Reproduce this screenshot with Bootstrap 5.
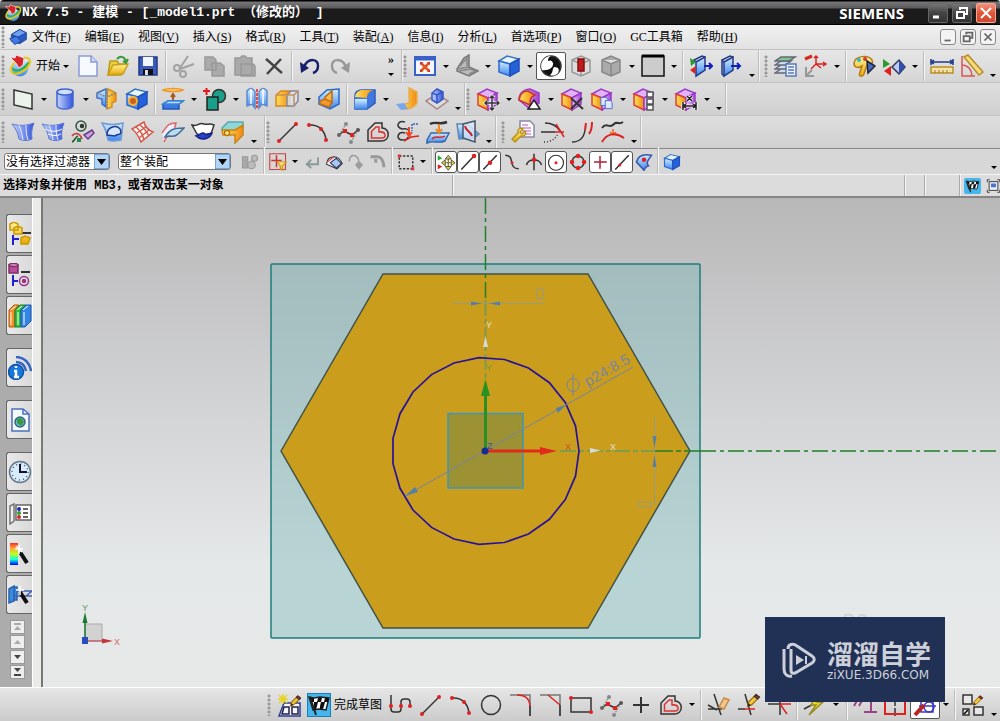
<!DOCTYPE html>
<html lang="zh-CN">
<head>
<meta charset="utf-8">
<meta name="viewport" content="width=device-width, initial-scale=1">
<title>NX 7.5 - 建模</title>
<link href="https://cdn.jsdelivr.net/npm/bootstrap@5.3.0/dist/css/bootstrap.min.css" rel="stylesheet">
<script src="https://cdn.jsdelivr.net/npm/bootstrap@5.3.0/dist/js/bootstrap.bundle.min.js" defer></script>
<style>
body{font:12px/16px "Liberation Serif","Noto Sans CJK SC",sans-serif;color:#000;background:#d6d6d6;overflow:hidden}
.btn{--bs-btn-padding-x:0;--bs-btn-padding-y:0;--bs-btn-font-size:12px;--bs-btn-line-height:16px;--bs-btn-border-radius:2px;font-family:inherit;color:#000;flex:none;white-space:nowrap}
.titlebar{height:25px;background:linear-gradient(#000 0,#000 1px,#77777a 2px,#5a5a5d 8px,#1b1b1c 9px,#1b1b1c 24px,#000 24px);color:#fff;font:bold 13px/18px "Liberation Mono","Noto Sans CJK SC",monospace;border-radius:4px 4px 0 0}
.caption{white-space:pre}
.maker{font:bold 15px/18px "Open Sans",sans-serif}
.win{width:20px;height:20px;border:1px solid #666;background:linear-gradient(#777,#444 50%,#333)}
.win.shut{background:linear-gradient(#f0927c,#e2563a 50%,#cf4a30);border-color:#f5a898}
.doc{width:16px;height:16px;border:1px solid #888;border-radius:3px;background:#f3f3f3}
.win svg,.doc svg{display:block;width:100%;height:100%;fill:none;stroke-width:2}
.menus{height:24px;background:linear-gradient(#f1f1f1,#e2e2e2)}
.menus a{color:#000;text-decoration:none;white-space:nowrap}
.menu-list{gap:14px}
.strip{height:33px;background:linear-gradient(#e6e6e6,#d5d5d5);border-top:1px solid #c3c3c3;overflow:hidden}
.strip.lower{background:linear-gradient(#dedede,#d0d0d0)}
.bar{height:100%;flex:none;border-right:1px solid #bdbdbd;box-shadow:1px 0 #f2f2f2}
.bar-main{width:402px}
.grip{width:8px;height:22px;flex:none;background:radial-gradient(circle at 3px 2px,#999 1px,transparent 2px) 0 0/8px 4px}
.tool{width:30px;height:28px;border:0;display:flex;align-items:center;justify-content:center}
.tool svg,.small-tool svg,.tab svg{width:24px;height:24px;fill:none;stroke:#333;stroke-width:1.5;flex:none}
.lit{background:#fff;border:1px solid #555}
.blue{background:#45b6ee;border:1px solid #1580b8;width:24px;height:24px;margin:0 3px}
.start{width:65px}
.drop{width:12px;height:24px;border:0;display:flex;align-items:center;justify-content:center}
.drop::after{content:"";border:solid transparent;border-width:3px 3px 0;border-top-color:#000}
.more{align-self:flex-end;height:14px}
.split{width:2px;height:30px;margin:0 2px;flex:none;border-left:1px solid #bcbcbc;background:#f5f5f5}
.picks{height:26px;border-top:1px solid #888;background:#d7d7d7}
.small-tool{width:22px;height:22px;border:0;display:flex;align-items:center;justify-content:center}
.small-tool svg{width:18px;height:18px}
.small-tool.lit{border:1px solid #555;border-radius:3px}
.combo{position:relative;flex:none}
.combo select{appearance:none;width:100%;height:17px;border:1px solid #777;border-radius:3px;padding:0 18px 0 1px;font-family:inherit;font-size:12px;line-height:14px;background:#fff;color:#000;display:block}
.combo svg{position:absolute;right:1px;top:1px;width:15px;height:15px;pointer-events:none}
.combo.wide-a{width:106px}.combo.wide-b{width:113px}
.prompt{height:24px;border-top:1px solid #f5f5f5;border-bottom:2px solid #858585;background:#dcdcdc;font:bold 12px/20px "Liberation Mono","Noto Sans CJK SC",monospace}
.cell{border-left:1px solid #aaa;box-shadow:inset 1px 0 #f5f5f5;height:100%}
.cell-a{width:20px}.cell-b{width:35px}.cell-c{width:41px}
.state{width:17px;height:16px}
.state svg{width:15px}
.msg{width:452px;padding-left:3px}
.side{width:32px;background:#acacac;padding:16px 0 0 6px}
.tab{width:26px;height:39px;border:1px solid #666;border-right:0;border-radius:3px 0 0 3px;background:linear-gradient(90deg,#e9e9e9,#d9d9d9);display:flex;align-items:center;justify-content:center;margin-bottom:2px}
.tab.apart{margin-top:13px}
.scrollers{padding-top:6px}
.scroller{width:15px;height:14px;border:1px solid #999;border-radius:0;background:#eee;margin:0 0 1px 4px;display:block}
.scroller svg{display:block;width:100%;height:100%}
.gutter{width:11px;background:#eaeae8;border-right:2px solid #777a74;border-left:1px solid #fff}
.stage{min-height:0}
.view{background:linear-gradient(#b8b8b9,#d4d5d6 45%,#e5e8e8 75%,#e7e9e9)}
.view>svg{position:absolute;inset:0;width:100%;height:100%;display:block}
.foot{height:34px;background:linear-gradient(#e6e6e6,#cbcbcb);border-top:1px solid #fff;padding-left:266px}
.brand{position:absolute;right:55px;bottom:19px;width:180px;height:85px;background:#213055;color:#cdd0d9;font-family:"Noto Sans CJK SC",sans-serif}
.brand svg{width:38px;height:38px;fill:none;stroke:#cdd0d9;stroke-width:3}
.brand b{font-size:26px;line-height:30px;display:block}
.brand small{font:12px/14px "DejaVu Sans",sans-serif;display:block}
</style>
</head>
<body class="d-flex flex-column vh-100 position-relative">
<svg width="0" height="0" class="position-absolute">
<defs>
<linearGradient id="gb"><stop stop-color="#c6d6ff"/><stop offset="1" stop-color="#3355dd"/></linearGradient>
<linearGradient id="gl" x2="0" y2="1"><stop stop-color="#d6efff"/><stop offset="1" stop-color="#3b86ee"/></linearGradient>
<linearGradient id="gy" x2="0" y2="1"><stop stop-color="#fff6a0"/><stop offset="1" stop-color="#e8a800"/></linearGradient>
<linearGradient id="go"><stop stop-color="#ffe25a"/><stop offset="1" stop-color="#f08a10"/></linearGradient>
<linearGradient id="gp"><stop stop-color="#f0c8ff"/><stop offset="1" stop-color="#a545d4"/></linearGradient>
<linearGradient id="rain" x2="0" y2="1"><stop stop-color="#e33"/><stop offset=".25" stop-color="#fa3"/><stop offset=".5" stop-color="#bf2"/><stop offset=".75" stop-color="#1fd"/><stop offset="1" stop-color="#00f"/></linearGradient>
</defs>
<symbol id="cube" viewBox="0 0 24 24"><path d="M2 7l8-5 12 3-9 5z" fill="#e4f5ff" stroke="#3979b8"/><path d="M2 7l11 3v12L2 18z" fill="url(#gl)" stroke="#2a6ad0"/><path d="M13 10l9-5v12l-9 5z" fill="#2462dc" stroke="#2050b8"/></symbol>
<symbol id="pink" viewBox="0 0 24 24"><path d="M2 7l9-5 10 4-9 5z" fill="#e3b2fa" stroke="#9b3bc8"/><path d="M2 7l10 4v12L2 18z" fill="url(#go)" stroke="#e0402c"/><path d="M12 11l9-5v11l-9 6z" fill="url(#gp)" stroke="#9b3bc8"/></symbol>
<symbol id="logo" viewBox="0 0 24 24"><circle cx="12" cy="14" r="8.500" fill="url(#gl)" stroke="none"/><path d="M4 14c4 5 11 2 17-6M5 19c6 2 13-2 14-8" stroke="#24b04a" stroke-width="2"/><ellipse cx="12.500" cy="12" rx="11" ry="6" transform="rotate(-35 12 12)" stroke="#e8c820" stroke-width="2" fill="none"/><path d="M2 3l5 1 1-3 8 3-1 7-4 3-3-5z" fill="#d8232a" stroke="#fff" stroke-width=".7"/></symbol>
<symbol id="flag" viewBox="0 0 24 24"><path d="M2 4l5 1 6-1 9 1-3 12-7-1-6 1z" fill="#fff" stroke="#222"/><path d="M3 5h4v4H4zm8 0h4l-1 4h-4zM7 9h4l-1 4H7zm7 0h4l-1 4h-4zM6 13h4l-1 4H7zm7 0h4l-1 3h-3zm5-8h4l-1 4h-4z" fill="#111" stroke="none"/><path d="M3 4l6 18" stroke="#222" stroke-width="2"/></symbol>
<symbol id="spline" viewBox="0 0 24 24"><path d="M3 15L8 11l8 4 6-5" stroke="#333"/><path d="M3 15L10 4M15 22l7-12" stroke="#999" stroke-dasharray="2 1"/><g stroke="none"><path d="M7 9h4v4H7zm7 4h4v4h-4z" fill="#d22"/><circle cx="3" cy="15" r="2" fill="#666"/><circle cx="10" cy="4" r="2" fill="#888"/><circle cx="15" cy="22" r="2" fill="#888"/><circle cx="22" cy="10" r="2" fill="#555"/></g></symbol>
<symbol id="offset" viewBox="0 0 24 24"><path d="M2 21V10l7-7h7v5c8 0 9 13-1 13z" stroke="#333"/><path d="M5.500 18v-6.500L10 7h3v5c7-1 8 6 3 6z" stroke="#d33"/></symbol>
<symbol id="line" viewBox="0 0 24 24"><path d="M3 21L20 4" stroke="#333"/><circle cx="3" cy="21" r="2" fill="#d22" stroke="none"/><circle cx="20" cy="4" r="2" fill="#d22" stroke="none"/></symbol>
<symbol id="arc" viewBox="0 0 24 24"><path d="M3 5c9-1 16 5 17 15"/><g fill="#d22" stroke="none"><circle cx="3" cy="5" r="2"/><circle cx="15" cy="9" r="2"/><circle cx="20" cy="20" r="2"/></g></symbol>
<symbol id="sheet" viewBox="0 0 24 24"><path d="M1 4c7 2 14 2 22-1-2 5-3 10-2 16-5 2-8 2-13 0C7 13 5 9 1 4z" fill="url(#gb)" stroke="#6078d0" stroke-width="1"/><path d="M8 5c2 5 3 9 4 15M15 5c0 5 0 9 2 15" stroke="#eef" stroke-width="1"/></symbol>
<symbol id="copy" viewBox="0 0 24 24"><path d="M3 3h8l3 3v10H3z" fill="#dde8ff" stroke="#4a6bd0"/><path d="M10 8h8l3 3v10H10z" fill="#dde8ff" stroke="#4a6bd0"/></symbol>
<symbol id="pencil" viewBox="0 0 24 24"><path d="M8 16l1-5 9-9 4 3-9 9z" fill="#f3c934" stroke="#9b6b10"/><path d="M16 4l2-2 4 3-2 2z" fill="#d23"/><path d="M8 16l1-4 3 3z" fill="#222" stroke="none"/></symbol>
</svg>

<header class="titlebar d-flex align-items-center px-1 flex-shrink-0">
<svg width="18" height="18" viewBox="0 0 24 24" fill="none"><use href="#logo"/></svg>
<span class="caption">NX 7.5 - 建模 - [_model1.prt （修改的） ]</span>
<span class="maker ms-auto me-4">SIEMENS</span>
<div class="d-flex gap-1">
<button class="btn win" aria-label="最小化"><svg viewBox="0 0 18 18" stroke="#fff"><path d="M4 13h6" stroke-width="3"/></svg></button>
<button class="btn win" aria-label="还原"><svg viewBox="0 0 18 18" stroke="#fff"><path d="M7 6V4h7v6h-3M4 8h7v6H4z"/></svg></button>
<button class="btn win shut" aria-label="关闭"><svg viewBox="0 0 18 18" stroke="#fff"><path d="M4 4l10 10M14 4L4 14"/></svg></button>
</div>
</header>

<nav class="menus d-flex align-items-center flex-shrink-0 pe-1">
<span class="grip me-n1"></span>
<svg class="me-1" width="20" height="20" viewBox="0 0 24 24" fill="none"><path d="M4 9l10-6 8 4v8l-8 5-10-3z" fill="#2a5bc8" stroke="#1c3f90"/><path d="M4 9l10-6 8 4-10 5z" fill="#6fa0f0" stroke="#1c3f90"/><path d="M2 14l8-3 6 6-8 4z" fill="#3f7be0" stroke="#1c3f90"/></svg>
<div class="menu-list d-flex">
<a href="#">文件(<u>F</u>)</a><a href="#">编辑(<u>E</u>)</a><a href="#">视图(<u>V</u>)</a><a href="#">插入(<u>S</u>)</a><a href="#">格式(<u>R</u>)</a><a href="#">工具(<u>T</u>)</a><a href="#">装配(<u>A</u>)</a><a href="#">信息(<u>I</u>)</a><a href="#">分析(<u>L</u>)</a><a href="#">首选项(<u>P</u>)</a><a href="#">窗口(<u>O</u>)</a><a href="#">GC工具箱</a><a href="#">帮助(<u>H</u>)</a>
</div>
<div class="d-flex ms-auto gap-1">
<button class="btn doc" aria-label="最小化窗口"><svg viewBox="0 0 16 16" stroke="#666"><path d="M4 12h7"/></svg></button>
<button class="btn doc" aria-label="还原窗口"><svg viewBox="0 0 16 16" stroke="#666"><path d="M6 5V3h7v6h-3M3 7h7v6H3z"/></svg></button>
<button class="btn doc" aria-label="关闭窗口"><svg viewBox="0 0 16 16" stroke="#666"><path d="M4 4l8 8M12 4l-8 8"/></svg></button>
</div>
</nav>

<div class="strip d-flex flex-shrink-0">
<div class="bar bar-main d-flex align-items-center">
<span class="grip"></span>
<button class="btn start d-flex align-items-center border-0"><svg width="24" height="26" viewBox="0 0 24 24" fill="none"><use href="#logo"/></svg><span class="ms-1">开始</span><span class="drop"></span></button>
<button class="btn tool" aria-label="新建"><svg viewBox="0 0 24 24"><path d="M3 2h12l6 6v14H3z" fill="#f6f9ff" stroke="#8a9ad8"/><path d="M15 2v6h6" fill="#cfdcff" stroke="#8a9ad8"/></svg></button>
<button class="btn tool" aria-label="打开"><svg viewBox="0 0 24 24"><path d="M2 21L4 7h7l2 3h7v3l-5 8z" fill="#e9cf3c" stroke="#b99a1c"/><path d="M2 21l5-10 15-1-5 10z" fill="url(#gy)" stroke="#c7a11c"/><path d="M11 5c4-4 8-2 9 3m-3-1l3 2 2-4" stroke="#3a9a3a" stroke-width="2"/></svg></button>
<button class="btn tool" aria-label="保存"><svg viewBox="0 0 24 24"><path d="M3 3h18v18H3z" fill="#3b59b8" stroke="#223a88"/><path d="M7 3h10v9H7z" fill="#f2f5fa" stroke="none"/><path d="M7 15h10v6H7z" fill="#111" stroke="none"/><path d="M9 16h3v5H9z" fill="#ddd" stroke="none"/></svg></button>
<span class="split"></span>
<button class="btn tool" aria-label="剪切"><svg viewBox="0 0 24 24"><g stroke="#a2a2a2" stroke-width="2"><path d="M8 14L16 2M8 15l14-5M8 14l-1-1"/><circle cx="5" cy="14" r="3"/><circle cx="11" cy="20" r="3"/></g></svg></button>
<button class="btn tool" aria-label="复制"><svg viewBox="0 0 24 24"><path d="M3 3h8l3 3v10H3zM10 9h8l4 3v10H10z" fill="#aaa" stroke="#999"/></svg></button>
<button class="btn tool" aria-label="粘贴"><svg viewBox="0 0 24 24"><path d="M3 4h5l2-2h3l2 2h5v17H3zM9 10h12l2 2v10H9z" fill="#aaa" stroke="#999"/></svg></button>
<button class="btn tool" aria-label="删除"><svg viewBox="0 0 24 24"><path d="M4 5c4 3 11 10 16 14M19 5L5 20" stroke="#444" stroke-width="2.500"/></svg></button>
<span class="split"></span>
<button class="btn tool" aria-label="撤消"><svg viewBox="0 0 24 24"><path d="M6 13C10 3 21 5 20 12c0 4-2 6-5 7" stroke="#17206a" stroke-width="2.500"/><path d="M2 8l1 11 8-5z" fill="#17206a" stroke="none"/></svg></button>
<button class="btn tool" aria-label="重做"><svg viewBox="0 0 24 24"><path d="M18 13C14 3 3 5 4 12c0 4 2 6 5 7" stroke="#999" stroke-width="2.500"/><path d="M22 8l-1 11-8-5z" fill="#999" stroke="none"/></svg></button>
<div class="ms-auto d-flex flex-column align-items-center me-1"><b>»</b><button class="btn drop more" aria-label="更多"></button></div>
</div>
<div class="bar d-flex align-items-center">
<span class="grip"></span>
<button class="btn tool" aria-label="适合窗口"><svg viewBox="0 0 24 24"><path d="M2 3h20v18H2z" fill="#f4f6ff" stroke="#3862c8" stroke-width="2"/><path d="M2 5h20" stroke="#3862c8" stroke-width="3"/><path d="M8 9l8 8M16 9l-8 8" stroke="#e05820" stroke-width="2.500"/><path d="M7 8h3l-3 3zm10 0v3l-3-3zM7 18v-3l3 3zm10 0h-3l3-3z" fill="#d03020" stroke="none"/></svg></button><button class="btn drop" aria-label="适合选项"></button>
<button class="btn tool" aria-label="视图方位"><svg viewBox="0 0 24 24"><g stroke="#777"><path d="M2 15L9 4l5-3v12l9 4-9 5-12-5z" fill="#bbb"/><path d="M2 15l12-2M5 12l7-8v8M4 17l11-2 6 2M14 20l7-3" stroke="#888"/></g></svg></button><button class="btn drop" aria-label="方位选项"></button>
<button class="btn tool" aria-label="着色"><svg><use href="#cube"/></svg></button><button class="btn drop" aria-label="着色选项"></button>
<button class="btn tool lit" aria-label="真实着色"><svg viewBox="0 0 24 24"><circle cx="12" cy="12" r="10" fill="#111"/><path d="M12 2a10 10 0 0 0-9 14c6 1 12-2 11-7-1-3-3-3-5-2 0-3 1-4 3-5zM15 13c4 0 6 2 4 6-3 3-6 3-8 2 3-2 2-5 4-8z" fill="#fff" stroke="none"/></svg></button>
<button class="btn tool" aria-label="截面"><svg viewBox="0 0 24 24"><path d="M3 6l9-4 9 4v12l-9 4-9-4zM3 6l9 4 9-4M12 10v12" fill="#ddd" stroke="#999"/><path d="M9 5h6v12H9z" fill="#c31b1b" stroke="#801010"/></svg></button>
<button class="btn tool" aria-label="编辑截面"><svg viewBox="0 0 24 24"><path d="M3 6l9-4 9 4v12l-9 4-9-4zM3 6l9 4 9-4M12 10v12" fill="#aaa" stroke="#888"/></svg></button><button class="btn drop" aria-label="截面选项"></button>
<button class="btn tool" aria-label="背景"><svg viewBox="0 0 24 24"><path d="M1 2h22v20H1z" fill="#ccc" stroke="#111"/><path d="M1 2h22" stroke="#000" stroke-width="3"/></svg></button><button class="btn drop" aria-label="背景选项"></button>
<span class="split"></span>
<button class="btn tool" aria-label="显示隐藏"><svg viewBox="0 0 24 24"><path d="M7 8l9-5v13l-9 6z" fill="url(#gl)" stroke="#223a88"/><path d="M7 8L5 6l8-4 3 1" stroke="#223a88"/><path d="M15 12h8m-3-3l3 3-3 3" stroke="#1020c0" stroke-width="2"/><path d="M1 4l6 4-5 4z" fill="#2a9a2a" stroke="none"/><path d="M7 12l-6 4 5 4z" fill="#d22" stroke="none"/></svg></button>
<button class="btn tool" aria-label="隐藏"><svg viewBox="0 0 24 24"><path d="M5 8l9-5v13l-9 6z" fill="url(#gl)" stroke="#223a88"/><path d="M5 8L3 6l8-4 3 1M3 6v14l2 2" stroke="#223a88"/><path d="M12 12h9m-3-3l3 3-3 3" stroke="#1020c0" stroke-width="2"/></svg></button>
<button class="btn drop more" aria-label="工具条选项"></button>
</div>
<div class="d-flex align-items-center">
<span class="grip ms-1"></span>
<button class="btn tool" aria-label="图层设置"><svg viewBox="0 0 24 24"><g stroke="#667"><path d="M1 19l6-4h10l-6 4zM1 15l6-4h10l-6 4zM1 11l6-4h10l-6 4z" fill="#cde"/><path d="M1 7l6-4h14l-6 4z" fill="#7cc98c"/></g><path d="M12 10h10v12H12z" fill="#eef3ff" stroke="#5878b8"/><path d="M14 13h6M14 16h6M14 19h6" stroke="#5878b8"/></svg></button>
<button class="btn tool" aria-label="WCS"><svg viewBox="0 0 24 24"><path d="M12 2v8l-5 5M12 10h10m-3-2l3 2-3 2M12 10l5 4M10 4l2-2 2 2" stroke="#d22"/><path d="M1 5l7-3" stroke="#d4291e" stroke-width="3"/><path d="M2 13v9h8M2 22l6-6" stroke="#999" stroke-width="2"/></svg></button><button class="btn drop" aria-label="WCS选项"></button>
<span class="split"></span>
<button class="btn tool" aria-label="对象显示"><svg viewBox="0 0 24 24"><path d="M2 9C3 2 16 0 20 6c2 4-2 5-5 5l-3 9c-2 4-6 2-4-2l2-6c-5 3-8 1-8-3z" fill="url(#gy)" stroke="#b87a18"/><circle cx="7" cy="6" r="2" fill="#2bc" stroke="none"/><circle cx="13" cy="5" r="2" fill="#d33" stroke="none"/><path d="M15 7l8 5-7 7z" fill="#456cc8" stroke="#223"/></svg></button>
<button class="btn tool" aria-label="显示切换"><svg viewBox="0 0 24 24"><path d="M1 5l7 5-7 4z" fill="#2a9a2a" stroke="none"/><path d="M9 12l-7 5 7 5z" fill="#d22" stroke="none"/><path d="M10 13l7-7 6 7-6 7z" fill="#b8cdf0" stroke="#335"/><path d="M17 6v14l6-7z" fill="#3050b0" stroke="none"/></svg></button><button class="btn drop" aria-label="显示选项"></button>
<span class="split"></span>
<button class="btn tool" aria-label="测量距离"><svg viewBox="0 0 24 24"><path d="M1 13h22v6H1z" fill="#f4e2a8" stroke="#b98e28"/><path d="M5 16v3M9 16v3M13 16v3M17 16v3" stroke="#a87818" stroke-width="1"/><path d="M1 8h22M1 5v6M23 5v6M4 6L1 8l3 2M20 6l3 2-3 2" stroke="#223a88"/></svg></button>
<button class="btn tool" aria-label="测量角度"><svg viewBox="0 0 24 24"><path d="M2 2v20h13M2 11c6 0 10 5 10 11" stroke="#d55"/><path d="M4 3l4-2 15 17-4 3z" fill="#f5db7a" stroke="#b98e28"/></svg></button>
<button class="btn drop more" aria-label="工具条选项"></button>
</div>
</div>

<div class="strip lower d-flex flex-shrink-0">
<div class="bar d-flex align-items-center">
<span class="grip"></span>
<button class="btn tool" aria-label="草图"><svg viewBox="0 0 24 24"><path d="M3 3l18 4v15L3 18z" fill="#eaf3ea" stroke="#333"/></svg></button><button class="btn drop" aria-label="草图选项"></button>
<button class="btn tool" aria-label="圆柱"><svg viewBox="0 0 24 24"><g stroke="#4464d0"><path d="M4 5v14c2 4 14 4 16 0V5z" fill="url(#gb)"/><ellipse cx="12" cy="5" rx="8" ry="3" fill="#cfe0ff"/></g></svg></button><button class="btn drop" aria-label="圆柱选项"></button>
<button class="btn tool" aria-label="求和"><svg viewBox="0 0 24 24"><path d="M2 6l9-4v18l-4-3v-5l-5-1z" fill="url(#gl)" stroke="#3b6fc0"/><path d="M13 2l8 4v8l-4 2v4l-5 2V10z" fill="url(#go)" stroke="#d8901c"/><path d="M2 6l10 4 9-4M12 2v20" stroke="#888" stroke-dasharray="2 1"/></svg></button>
<button class="btn tool" aria-label="孔"><svg viewBox="0 0 24 24"><use href="#cube"/><circle cx="8" cy="14" r="4" fill="#c9621a" stroke="#f3b13c" stroke-width="2"/></svg></button>
<span class="split"></span>
<button class="btn tool" aria-label="凸台"><svg viewBox="0 0 24 24"><path d="M2 3c4-2 16-2 20 0-4 2-16 2-20 0z" fill="#ffd890" stroke="#f09828"/><path d="M12 14V7m-2 3l2-3 2 3" stroke="#a85a20" stroke-width="2"/><path d="M2 17l5-3h15l-4 3v5H2z" fill="#3c79e2" stroke="#2357b8"/><path d="M2 17h16l4-3H7z" fill="#b8dcff" stroke="#3b86d8"/></svg></button><button class="btn drop" aria-label="凸台选项"></button>
<button class="btn tool" aria-label="布尔"><svg viewBox="0 0 24 24"><path d="M0 4h7M3.500 1v7" stroke="#e01818" stroke-width="2"/><circle cx="16" cy="9" r="6.500" fill="#1aa08a"/><path d="M4 10h11v13H4z" fill="#1aa08a" stroke="#222"/></svg></button><button class="btn drop" aria-label="布尔选项"></button>
<button class="btn tool" aria-label="镜像"><svg viewBox="0 0 24 24"><g stroke="#5a88d0"><path d="M2 4c3-4 6-3 8 1v16l-3-4-5 2zM22 4c-3-4-6-3-8 1v16l3-4 5 2z" fill="url(#gl)"/></g><path d="M6 2v15M18 2v15" stroke="#fff"/><path d="M12 2v20" stroke="#d22" stroke-dasharray="3 1"/></svg></button>
<button class="btn tool" aria-label="修剪体"><svg viewBox="0 0 24 24"><path d="M1 8l5-4h9v15H1z" fill="url(#go)" stroke="#d88820"/><path d="M12 8l4-4h7v10l-4 5h-7z" fill="#d8e4f8" stroke="#889" fill-opacity=".8"/><path d="M1 8h18l4-4M19 8v11" stroke="#c89050"/></svg></button><button class="btn drop" aria-label="修剪选项"></button>
<button class="btn tool" aria-label="抽壳"><svg viewBox="0 0 24 24"><path d="M2 10l8-7 12-1v15l-9 5-11-5z" fill="url(#gl)" stroke="#2a6ad0"/><path d="M8 10l7-6v12l-7-2z" fill="#f6b74a" stroke="#b76b10"/><path d="M3 14l5-2 7 3-3 5-9-3z" fill="#ef9a2a" stroke="#c46f10"/></svg></button>
<span class="split"></span>
<button class="btn tool" aria-label="边倒圆"><svg viewBox="0 0 24 24"><path d="M2 9c0-5 4-6 7-6h13v13l-8 6H2z" fill="#3f78df" stroke="#2d5dc0"/><path d="M2 10c1-5 4-7 8-7h11c-5 1-7 4-7 8z" fill="url(#go)" stroke="none"/><path d="M2 12h12v10H2z" fill="url(#gl)" stroke="none"/></svg></button><button class="btn drop" aria-label="倒圆选项"></button>
<button class="btn tool" aria-label="面倒圆"><svg viewBox="0 0 24 24"><path d="M14 1l8 4v11c-4 6-11 7-16 5l4-4c4 0 5-3 4-6z" fill="url(#go)" stroke="#e8ae50"/><path d="M1 17l8-1 4 6-7 1z" fill="#76a7f0" stroke="none"/></svg></button>
<button class="btn tool" aria-label="偏置面"><svg viewBox="0 0 24 24"><path d="M1 14l11-7 11 7-11 8z" fill="#ddd" stroke="#a88"/><path d="M7 6l5-4 6 3v7l-6 4-5-3z" fill="url(#gb)" stroke="#3858c0"/><path d="M7 6l5 2 6-3M12 8v8" stroke="#3858c0"/></svg></button>
<button class="btn drop more" aria-label="工具条选项"></button>
</div>
<div class="bar d-flex align-items-center">
<span class="grip"></span>
<button class="btn tool" aria-label="移动面"><svg viewBox="0 0 24 24"><use href="#pink"/><path d="M16 9v14M9 16h14M14 11l2-2 2 2M14 21l2 2 2-2M11 14l-2 2 2 2M21 14l2 2-2 2" stroke="#fff" stroke-width="3"/><path d="M16 9v14M9 16h14M14 11l2-2 2 2M14 21l2 2 2-2M11 14l-2 2 2 2M21 14l2 2-2 2"/></svg></button><button class="btn drop" aria-label="移动选项"></button>
<button class="btn tool" aria-label="拉出面"><svg viewBox="0 0 24 24"><path d="M1 13c0-8 6-11 11-11l9 4v10l-9 6z" fill="url(#gp)" stroke="#9b3bc8"/><path d="M1 13c1-7 5-9 9-9l7 4c-5 2-5 5-5 10z" fill="url(#go)" stroke="#c33"/><path d="M16 13l6 9H10z" fill="#fff" stroke="#222"/></svg></button><button class="btn drop" aria-label="拉出选项"></button>
<button class="btn tool" aria-label="删除面"><svg viewBox="0 0 24 24"><use href="#pink"/><path d="M11 11l12 11M22 11L11 22" stroke-width="2"/></svg></button>
<button class="btn tool" aria-label="复制面"><svg viewBox="0 0 24 24"><use href="#pink"/><use href="#copy" x="9" y="8" width="15" height="16"/></svg></button><button class="btn drop" aria-label="复制选项"></button>
<button class="btn tool" aria-label="成组面"><svg viewBox="0 0 24 24"><use href="#pink"/><path d="M15 5h6v5h-6zM15 12h6v5h-6zM15 18h6v5h-6z" fill="#fff" stroke="#555"/></svg></button><button class="btn drop" aria-label="成组选项"></button>
<button class="btn tool" aria-label="线性尺寸"><svg viewBox="0 0 24 24"><use href="#pink"/><path d="M9 15v8M22 15v8M9 19h13M12 17l-3 2 3 2M19 17l3 2-3 2M13 9l5 5M18 9l-5 5" stroke="#fff" stroke-width="3"/><path d="M9 15v8M22 15v8M9 19h13M12 17l-3 2 3 2M19 17l3 2-3 2M13 9l5 5M18 9l-5 5" stroke="#222"/></svg></button><button class="btn drop" aria-label="尺寸选项"></button>
<button class="btn drop more" aria-label="工具条选项"></button>
</div>
</div>

<div class="strip lower d-flex flex-shrink-0">
<div class="bar d-flex align-items-center pe-1">
<span class="grip"></span>
<button class="btn tool" aria-label="直纹"><svg><use href="#sheet"/></svg></button>
<button class="btn tool" aria-label="通过曲线网格"><svg viewBox="0 0 24 24"><use href="#sheet"/><path d="M4 9c6 3 12 3 17 0M7 14c5 2 9 2 13 0" stroke="#fff" stroke-width="1"/></svg></button>
<button class="btn tool" aria-label="扫掠"><svg viewBox="0 0 24 24"><circle cx="10" cy="6" r="5" stroke="#354"/><circle cx="11" cy="6" r="1.500" fill="#252"/><path d="M1 16c3-4 8-3 10 3" stroke="#c33"/><path d="M1 22c3-1 3-5 6-6" stroke="#252"/><path d="M6 18h4v4H6z" fill="#285" stroke="none"/><path d="M13 15l8-5 2 3-6 6z" fill="#c6a4dc" stroke="#6a3a90"/></svg></button>
<button class="btn tool" aria-label="N边曲面"><svg viewBox="0 0 24 24"><path d="M1 3c7 2 14 2 21 0l-2 17c-5 1-9 2-13 0C6 13 4 8 1 3z" fill="url(#gl)" stroke="#6f9cd8"/><path d="M6 15c-1-9 13-12 14-3 0 4-4 1-6 4z" stroke="#223a88" fill="#d6e6ff"/></svg></button>
<button class="btn tool" aria-label="艺术曲面"><svg viewBox="0 0 24 24"><g stroke="#d65a4c"><path d="M1 9l12-7c1 5 4 8 9 10L10 22C8 17 5 12 1 9z" fill="#f8f4f2"/><path d="M5 7c5 4 7 8 8 13M9 5c4 3 7 7 9 11M6 13l10-7M8 18l10-8"/></g></svg></button>
<button class="btn tool" aria-label="剖切曲面"><svg viewBox="0 0 24 24"><path d="M1 13c5-6 5-10 14-10-4 8 3 9-1 13-6-4-8 0-11 6" fill="#eef" stroke="#d66"/><path d="M4 17c5-8 9-9 19-9-6 6-7 9-15 8z" fill="#b9dcf0" stroke="#426c96"/></svg></button>
<button class="btn tool" aria-label="修补"><svg viewBox="0 0 24 24"><path d="M1 5c7 2 6-3 12-1 4 1 5-1 10 1l-3 9c-5-1-7 3-14 0z" fill="#fff"/><path d="M5 16c5-1 6-5 9-2 2 2 4-1 7-1-2 6-9 7-13 5z" fill="#2941c8" stroke="#18248c"/></svg></button>
<button class="btn tool" aria-label="延伸"><svg viewBox="0 0 24 24"><path d="M1 8l6-6h15v6l-8 4H2z" fill="#8fd6d8" stroke="#5aa"/><path d="M1 10h13l8-5v10l-8 8v-8H2z" fill="url(#go)" stroke="#c68518"/><circle cx="6" cy="13" r="2.500" fill="#fff39b" stroke="#b70"/></svg></button>
<button class="btn drop more" aria-label="工具条选项"></button>
</div>
<div class="bar d-flex align-items-center">
<span class="grip"></span>
<button class="btn tool" aria-label="直线"><svg><use href="#line"/></svg></button>
<button class="btn tool" aria-label="圆弧"><svg><use href="#arc"/></svg></button>
<button class="btn tool" aria-label="艺术样条"><svg><use href="#spline"/></svg></button>
<button class="btn tool" aria-label="偏置曲线"><svg><use href="#offset"/></svg></button>
<button class="btn tool" aria-label="桥接曲线"><svg viewBox="0 0 24 24"><path d="M9 2c-7-2-10 5-3 7 3 0 5-1 6 1M9 13c-7-2-10 6-3 7 3 0 5 0 6-3"/><path d="M22 4h-6v7" stroke="#36c" stroke-dasharray="2 1"/><path d="M13 7v7m-3-2l3 4 3-4" stroke="#e42" stroke-width="2"/><path d="M8 21l7-4 8-1" stroke="#d22"/></svg></button>
<button class="btn tool" aria-label="投影曲线"><svg viewBox="0 0 24 24"><path d="M1 20l4-7h18l-4 8c-6 3-12-1-18 2z" fill="url(#gl)" stroke="#36a"/><path d="M4 4c5-3 10 1 17-2" stroke-width="2.500"/><path d="M13 4v7m-3-2l3 4 3-4" stroke="#e82" stroke-width="2"/><path d="M6 19c3-4 9 0 13-3" stroke="#d22"/></svg></button>
<button class="btn tool" aria-label="截面曲线"><svg viewBox="0 0 24 24"><path d="M1 4h10l12 10-5 4-15 1z" fill="url(#gl)" stroke="#68a"/><path d="M7 4l12-3v21L7 18z" fill="#dbeafa" fill-opacity=".8" stroke="#456"/><path d="M9 6c1 6 5 4 7 10" stroke="#c22" stroke-width="2"/></svg></button>
<button class="btn drop more" aria-label="工具条选项"></button>
</div>
<div class="bar d-flex align-items-center ps-1">
<span class="grip"></span>
<button class="btn tool" aria-label="编辑参数"><svg viewBox="0 0 24 24"><path d="M9 1h10l4 4v12H9z" fill="#fff" stroke="#88a"/><path d="M11 5h6M11 8h9M11 11h9M14 14h6" stroke="#d58ad0"/><path d="M1 19l6-6c-1-4 3-6 5-4l-3 3 2 2 3-3c2 3-1 6-4 5l-6 6z" fill="url(#gy)" stroke="#b8931c"/></svg></button>
<button class="btn tool" aria-label="修剪曲线"><svg viewBox="0 0 24 24"><path d="M4 3c8 0 12 3 15 8M0 12h14"/><path d="M14 12h9M15 4l8 13" stroke="#d22"/><path d="M3 22c7 0 12-3 14-9" stroke-dasharray="1 2"/></svg></button>
<button class="btn tool" aria-label="曲线长度"><svg viewBox="0 0 24 24"><path d="M1 22c8 0 12-5 13-12"/><path d="M14 10l1-7M18 14c3-4 3-8 3-12" stroke="#d22" stroke-width="2"/></svg></button>
<button class="btn tool" aria-label="光顺样条"><svg viewBox="0 0 24 24"><path d="M1 8c5-7 7 2 12-4 3-3 5 1 9-2" stroke-width="2"/><path d="M12 9v5m-3-2l3 3 3-3" stroke="#e62"/><path d="M1 22c5-9 14-10 22-4" stroke="#d22" stroke-width="2"/></svg></button>
<button class="btn drop more" aria-label="工具条选项"></button>
</div>
</div>

<div class="picks d-flex align-items-center flex-shrink-0 ps-1">
<div class="combo wide-a me-2"><select aria-label="类型过滤器"><option>没有选择过滤器</option></select><svg viewBox="0 0 15 15"><path d="M0 0h15v15H0z" fill="#b3d4f4" stroke="#3a7bc0"/><path d="M3 5h9l-4.500 6z"/></svg></div>
<div class="combo wide-b me-2"><select aria-label="选择范围"><option>整个装配</option></select><svg viewBox="0 0 15 15"><path d="M0 0h15v15H0z" fill="#b3d4f4" stroke="#3a7bc0"/><path d="M3 5h9l-4.500 6z"/></svg></div>
<button class="btn small-tool" aria-label="选择过滤"><svg viewBox="0 0 24 24"><g stroke="#999"><path d="M2 5h7v6H2zM2 13h7v7H2z" fill="#aaa"/><circle cx="18" cy="7" r="4" fill="#bbb"/><circle cx="14" cy="16" r="5" fill="#bbb"/></g></svg></button>
<span class="split"></span>
<button class="btn small-tool" aria-label="捕捉"><svg viewBox="0 0 24 24"><path d="M1 1h21v21H1z" stroke="#c44"/><path d="M10 3v16M3 10h14" stroke="#c33" stroke-width="2"/><path d="M11 12h12l-5 5v6l-3-2v-4z" fill="url(#gy)" stroke="#c91"/></svg></button><button class="btn drop me-n1" aria-label="捕捉选项"></button>
<button class="btn small-tool" aria-label="返回"><svg viewBox="0 0 24 24"><path d="M20 6v9H6m5-6l-6 6 6 5" stroke="#899" stroke-width="2.500"/></svg></button>
<button class="btn small-tool" aria-label="实体面"><svg viewBox="0 0 24 24"><path d="M2 15c1-8 4-9 10-10 5 0 9 5 11 9l-7 7z" fill="#fff"/><path d="M7 13l8-6 7 7-7 6z" fill="#aac6f5" stroke="#346"/><path d="M3 12l9-7" stroke="#d44"/></svg></button>
<button class="btn small-tool" aria-label="相切"><svg viewBox="0 0 24 24"><g stroke="#999" stroke-width="2"><path d="M3 11c0-11 12-10 13 2v9M11 16h10"/><circle cx="16" cy="16" r="3"/></g></svg></button>
<button class="btn small-tool" aria-label="相交"><svg viewBox="0 0 24 24"><path d="M2 5h9c5 0 8 3 9 14M9 8v5" stroke="#999" stroke-width="4"/></svg></button>
<span class="split"></span>
<button class="btn small-tool" aria-label="矩形"><svg viewBox="0 0 24 24"><path d="M3 4h18v17H3z" stroke-dasharray="3 2" stroke-width="2"/><path d="M1 2h4v4H1zM19 19h4v4h-4z" fill="#d33" stroke="none"/></svg></button><button class="btn drop" aria-label="矩形选项"></button>
<span class="split"></span>
<button class="btn small-tool lit" aria-label="启用捕捉"><svg viewBox="0 0 24 24"><path d="M1 3l6 4-6 3z" fill="#2a3" stroke="none"/><path d="M1 15l6 3-6 4z" fill="#d22" stroke="none"/><path d="M15 6v15M8 13h14" stroke="#776a20"/><path d="M15 3l4 5h-8zM15 23l4-5h-8zM6 13l5-4v8zM24 13l-5-4v8z" fill="#dfd23c" stroke-width="1"/></svg></button>
<button class="btn small-tool lit" aria-label="端点"><svg viewBox="0 0 24 24"><path d="M3 22L21 3" stroke-width="2"/><circle cx="20" cy="4" r="3" fill="#d22" stroke="none"/></svg></button>
<button class="btn small-tool lit" aria-label="中点"><svg viewBox="0 0 24 24"><path d="M3 22L21 3" stroke-width="2"/><circle cx="12" cy="13" r="3" fill="#d22" stroke="none"/></svg></button>
<button class="btn small-tool" aria-label="控制点"><svg viewBox="0 0 24 24"><path d="M3 3c14 0 3 18 18 18" stroke-width="2"/><circle cx="12" cy="13" r="2" fill="#d22" stroke="none"/></svg></button>
<button class="btn small-tool" aria-label="交点"><svg viewBox="0 0 24 24"><path d="M12 1v22M2 16c2-9 18-9 20 0" stroke-width="2"/><circle cx="12" cy="9" r="3" fill="#d22" stroke="none"/></svg></button>
<button class="btn small-tool lit" aria-label="圆心"><svg viewBox="0 0 24 24"><circle cx="12" cy="13" r="10"/><circle cx="12" cy="13" r="2" fill="#d22" stroke="none"/></svg></button>
<button class="btn small-tool" aria-label="象限点"><svg viewBox="0 0 24 24"><circle cx="12" cy="12" r="8" stroke-width="2"/><g fill="#d22" stroke="none"><circle cx="12" cy="4" r="3"/><circle cx="4" cy="12" r="3"/><circle cx="20" cy="12" r="3"/><circle cx="12" cy="20" r="3"/></g></svg></button>
<button class="btn small-tool lit" aria-label="现有点"><svg viewBox="0 0 24 24"><path d="M12 4v17M4 12h17" stroke="#a23" stroke-width="2"/></svg></button>
<button class="btn small-tool lit" aria-label="曲线上的点"><svg viewBox="0 0 24 24"><path d="M3 22L21 3" stroke-width="2"/><circle cx="9" cy="16" r="2" fill="#d22" stroke="none"/></svg></button>
<button class="btn small-tool" aria-label="面上的点"><svg viewBox="0 0 24 24"><path d="M2 12C4 3 12 1 22 3c-4 6-8 10-4 14-4 1-5 3-6 6z" fill="url(#gl)" stroke="#35a" stroke-width="2"/><circle cx="12" cy="9" r="3" fill="#d22" stroke="none"/></svg></button>
<span class="split"></span>
<button class="btn small-tool" aria-label="着色体"><svg><use href="#cube"/></svg></button>
<button class="btn drop more ms-auto" aria-label="工具条选项"></button>
</div>

<div class="prompt d-flex align-items-center flex-shrink-0">
<div class="msg text-nowrap">选择对象并使用 MB3，或者双击某一对象</div>
<div class="cell flex-grow-1"></div><div class="cell cell-a"></div><div class="cell cell-b"></div>
<div class="cell cell-c d-flex align-items-center">
<button class="btn small-tool blue state mx-1" aria-label="草图状态"><svg><use href="#flag"/></svg></button>
<button class="btn small-tool state" aria-label="全屏"><svg viewBox="0 0 24 24"><path d="M5 5h14v14H5z" fill="#eef"/><path d="M8 8h8v6H8z" fill="#47c" stroke="none"/><path d="M2 6V2h4M18 2h4v4M2 18v4h4M18 22h4v-4"/></svg></button></div>
</div>

<main class="stage d-flex flex-grow-1">
<aside class="side flex-shrink-0 overflow-hidden">
<button class="btn tab" aria-label="装配导航器"><svg viewBox="0 0 24 24"><path d="M5 13v10M5 17h6" stroke="#22c" stroke-width="2"/><path d="M14 11h9" stroke-width="2"/><g fill="url(#gy)" stroke="#c90"><path d="M2 2l4-2 4 2v6H2zM6 6l4-2 4 2v6H6zM13 16l4-2 5 2-2 6h-7z"/></g></svg></button>
<button class="btn tab" aria-label="部件导航器"><svg viewBox="0 0 24 24"><path d="M5 12v11M5 18h5" stroke="#22c" stroke-width="2"/><path d="M13 9h9" stroke-width="2"/><path d="M1 2h9v8H1z" fill="#b84a98" stroke="#803068"/><ellipse cx="5.500" cy="2" rx="4.500" ry="1.500" fill="#e4a9d2" stroke="#803068"/><circle cx="16" cy="18" r="4.500" stroke="#938"/><circle cx="16" cy="18" r="1.500" fill="#c27" stroke="#938"/></svg></button>
<button class="btn tab" aria-label="重用库"><svg viewBox="0 0 24 24"><g stroke-width="1"><path d="M1 6l5-5h5L7 6v17H1z" fill="#f58b22" stroke="#b65a10"/><path d="M7 6l5-5h6l-5 5v17H7z" fill="#2ebf3a" stroke="#17812a"/><path d="M13 6l5-5h5v16l-6 6h-4z" fill="#3285e4" stroke="#1a59ae"/><path d="M3 6l5-4M9 6l5-4M15 6l5-4M3 8v13M10 8v13M16 8v13" stroke="#fff"/></g></svg></button>
<button class="btn tab apart" aria-label="信息"><svg viewBox="0 0 24 24"><path d="M8 1c8 0 14 6 15 14M8 6c6 0 9 4 10 9" stroke="#3465c0" stroke-width="2.500"/><circle cx="8" cy="16" r="7.500" fill="#1778dc" stroke="#1253a8"/><path d="M8 10v2M6 15h2v6M6 21h5" stroke="#fff" stroke-width="2.500"/></svg></button>
<button class="btn tab apart" aria-label="浏览器"><svg viewBox="0 0 24 24"><path d="M4 1h11l6 5v17H4z" fill="#f4f8ff" stroke="#4a70c0"/><path d="M15 1v5h6" stroke="#4a70c0"/><circle cx="12" cy="14" r="5" fill="#68b7e8" stroke="#367"/><path d="M9 11l4-1 3 4-3 4-4-3z" fill="#3a9a3a" stroke="none"/></svg></button>
<button class="btn tab apart" aria-label="历史记录"><svg viewBox="0 0 24 24"><circle cx="12" cy="12" r="10.500" fill="#d8ebfa" stroke="#678"/><circle cx="12" cy="12" r="8" stroke="#456" stroke-dasharray="1 3.200"/><path d="M12 4v8h7" stroke="#113" stroke-width="2"/></svg></button>
<button class="btn tab" aria-label="材料"><svg viewBox="0 0 24 24"><path d="M8 4h15v15H8z" fill="#fff" stroke="#666"/><path d="M2 5l4-2v17l-4 3z" fill="#eee" stroke="#777"/><g stroke="none"><circle cx="11" cy="8" r="2" fill="#22c"/><circle cx="11" cy="12" r="2" fill="#2a2"/><circle cx="11" cy="16" r="2" fill="#d22"/></g><path d="M15 8h5M15 12h5M15 16h5"/></svg></button>
<button class="btn tab" aria-label="可视化"><svg viewBox="0 0 24 24"><path d="M2 1h8v22H2z" fill="url(#rain)" stroke="none"/><path d="M12 10l7 11" stroke="#111" stroke-width="4"/><path d="M11 3v9M7 7h8M8 4l6 6" stroke="#fff"/></svg></button>
<button class="btn tab mb-0" aria-label="角色"><svg viewBox="0 0 24 24"><path d="M1 6l5-3v15l-5 2zM6 4h3v13H6z" fill="#398be0" stroke="#2b62a8"/><path d="M7 13h17M9 8h15l-6 5" stroke="#4360b0"/><path d="M12 9l7 11" stroke="#111" stroke-width="4"/><path d="M12 3v9M8 7h8" stroke="#fff"/></svg></button>
<div class="scrollers">
<button class="btn scroller" aria-label="最前"><svg viewBox="0 0 13 12" fill="#aaa"><path d="M3 2h7v2H3zm0 7h7L6.500 5z"/></svg></button>
<button class="btn scroller" aria-label="向上"><svg viewBox="0 0 13 12" fill="#aaa"><path d="M3 8h7L6.500 4z"/></svg></button>
<button class="btn scroller" aria-label="向下"><svg viewBox="0 0 13 12" fill="#444"><path d="M3 4h7L6.500 8z"/></svg></button>
<button class="btn scroller" aria-label="最后"><svg viewBox="0 0 13 12" fill="#444"><path d="M3 2h7L6.500 6zm0 6h7v2H3z"/></svg></button>
</div>
</aside>
<div class="gutter flex-shrink-0"></div>
<div class="view flex-grow-1 position-relative overflow-hidden">
<svg viewBox="43 198 957 489" preserveAspectRatio="xMidYMid slice" fill="none" font-family="Liberation Sans, sans-serif">
<rect x="271" y="264" width="429" height="374" rx="1" fill="#79b8b8" fill-opacity=".42" stroke="#1f7c7e" stroke-width="1.500"/>
<path d="M281 451L383 274H588L690 451L588 628H383z" fill="#ca9e1c" stroke="#3f5248" stroke-width="1.500"/>
<path d="M485.500 198V300M700 451H1000" stroke="#1e8028" stroke-width="1.500" stroke-dasharray="16 4 4 4"/>
<path d="M485.500 300V380M560 451H655" stroke="#7f9b4c" stroke-width="2" stroke-dasharray="16 3 5 3"/>
<path d="M655 451H700" stroke="#1e8028" stroke-width="1.500" stroke-dasharray="18 3 5 3"/>
<path d="M448 413.500h75v74.500h-75z" fill="#587f58" fill-opacity=".4" stroke="#3d98b8" stroke-width="1.500"/>
<path d="M579 451L575.500 425.800 565.300 402.400 549.400 382.700 528.500 368 504.500 359.500 479 357.700 454 363 431.500 374.600 413 392 400 413.700 393 438.300V463.700L400 488.300 413 510 431.500 527.400 454 539 479 544.300 504.500 542.500 528.500 534 549.400 519.300 565.300 499.600 575.500 476.200z" stroke="#28129a" stroke-width="1.700"/>
<g stroke="#7482a8"><path d="M405 496L633 367" stroke-width="1"/><g stroke="#9a9a7c" stroke-width="1"><path d="M452 303.500h92M654.500 417v88"/><path d="M537 289h6v10h-6zM638 502h13v5h-13z"/></g><ellipse cx="573" cy="385" rx="6" ry="6.500"/><path d="M573 374v22"/></g>
<g fill="#567fa8"><path d="M405 496l10-9 3 5zM566 405l-10 3 2 5zM482 303.500l-11-2v4zM489 303.500l11-2v4zM654.500 448l-2-12h4zM654.500 455l-2 12h4z"/></g>
<text transform="translate(588 387) rotate(-30)" font-size="15" fill="#7d84a0">p24:8.5</text>
<path d="M485.500 451V395" stroke="#299022" stroke-width="3"/><path d="M485.500 379l-4.500 17h9z" fill="#299022"/>
<path d="M486 451h58" stroke="#df2a1c" stroke-width="3"/><path d="M557 451l-17-4v8z" fill="#df2a1c"/>
<path d="M485.500 336l-2.500 11h5zM601 450.500l-11-2.500v5z" fill="#d8d8d8"/>
<circle cx="485" cy="451" r="3.500" fill="#152c90"/>
<g font-size="9"><text x="486" y="328" fill="#e2dfc8">Y</text><text x="486" y="371" fill="#7b9838">Y</text><text x="565" y="450" fill="#d25024">X</text><text x="610" y="450" fill="#e2dfc8">X</text><text x="487" y="449" fill="#3653b0">Z</text></g>
<path d="M85 624h17v17H85z" fill="#d2d2d2" stroke="#aaa"/><path d="M85 641v-18" stroke="#187a30" stroke-width="1.500"/><path d="M85 612l-2.500 11h5z" fill="#187a30"/><path d="M85 641h20" stroke="#c8343c"/><path d="M113 641l-11-2.500v5z" fill="#c8343c"/><path d="M82 637h6v7h-6z" fill="#2b4bc0"/>
<g font-size="9"><text x="82" y="611" fill="#5b9870">Y</text><text x="114" y="645" fill="#d66">X</text></g>
<path d="M843 619c2-6 9-6 11 0M858 617c2-3 6-3 8 0" stroke="#cfd5da" stroke-width="2"/>
</svg>
</div>
</main>

<footer class="foot d-flex align-items-center flex-shrink-0">
<span class="grip me-n1"></span><button class="btn tool" aria-label="草图首选项"><svg viewBox="0 0 24 24"><path d="M2 23l5-13h16v13z" fill="#f5f6ff" stroke="#2c3c90"/><path d="M7 14h5v7H5zM15 14h6v7h-6z" stroke="#224"/><path d="M6 1v10M1 6h10M2 2l8 8M10 2L2 10" stroke="#e8d41c"/><use href="#pencil" x="8" y="0" width="17" height="20"/></svg></button>
<button class="btn d-flex align-items-center border-0"><span class="tool blue"><svg><use href="#flag"/></svg></span>完成草图</button>
<button class="btn tool ms-1" aria-label="轮廓"><svg viewBox="0 0 24 24"><path d="M2 2v14c0 2 1 3 3 3h4c2 0 3-1 3-3V9c0-2 1-3 3-3h3c2 0 3 1 3 3v4"/><g fill="#d22" stroke="none"><circle cx="2" cy="13" r="2"/><circle cx="12" cy="13" r="2"/><circle cx="21" cy="13" r="2"/></g></svg></button>
<button class="btn tool" aria-label="直线"><svg><use href="#line"/></svg></button>
<button class="btn tool" aria-label="圆弧"><svg><use href="#arc"/></svg></button>
<button class="btn tool" aria-label="圆"><svg viewBox="0 0 24 24"><circle cx="12" cy="12" r="9.500"/></svg></button>
<button class="btn tool" aria-label="圆角"><svg viewBox="0 0 24 24"><path d="M1 2h20v21" stroke="#777"/><path d="M8 2c9 0 13 4 13 12" stroke="#d22"/><path d="M21 13v10"/></svg></button>
<button class="btn tool" aria-label="倒斜角"><svg viewBox="0 0 24 24"><path d="M1 2h20v21" stroke="#777"/><path d="M9 2l12 10" stroke="#d22"/><path d="M21 12v11"/></svg></button>
<button class="btn tool" aria-label="矩形"><svg viewBox="0 0 24 24"><path d="M2 5h20v14H2z"/><circle cx="2" cy="5" r="2" fill="#d22" stroke="none"/><circle cx="22" cy="19" r="2" fill="#d22" stroke="none"/></svg></button>
<button class="btn tool" aria-label="艺术样条"><svg><use href="#spline"/></svg></button>
<button class="btn tool" aria-label="点"><svg viewBox="0 0 24 24"><path d="M12 4v16M4 12h16" stroke-width="2"/></svg></button>
<button class="btn tool" aria-label="偏置曲线"><svg><use href="#offset"/></svg></button><button class="btn drop" aria-label="偏置选项"></button>
<span class="split"></span>
<button class="btn tool" aria-label="快速修剪"><svg viewBox="0 0 24 24"><path d="M7 1l7 21M1 16h14M1 12l9 5"/><path d="M12 14l5-9 5 2-5 9z" fill="#edc98c" stroke="#c84"/></svg></button>
<button class="btn tool" aria-label="快速延伸"><svg viewBox="0 0 24 24"><path d="M8 1l6 21M1 16h7"/><path d="M8 16h10" stroke="#d22"/><use href="#pencil" x="4" y="0" width="20" height="20"/></svg></button>
<button class="btn tool" aria-label="制作拐角"><svg viewBox="0 0 24 24"><path d="M13 0v22M1 11h12"/><path d="M13 11h11M13 11l7 10" stroke="#d22"/></svg></button>
<span class="split"></span>
<button class="btn tool" aria-label="自动判断尺寸"><svg viewBox="0 0 24 24"><path d="M1 16L22 5"/><path d="M14 1L8 12h5L6 22 20 9h-6z" fill="#e7d62b" stroke="#998c20"/></svg></button><button class="btn drop" aria-label="尺寸选项"></button>
<span class="split ms-1"></span>
<button class="btn tool" aria-label="约束"><svg viewBox="0 0 24 24"><path d="M1 13l5-9M6 13l5-9M18 2v17M11 19h13" stroke="#948" stroke-width="2"/></svg></button>
<button class="btn tool" aria-label="显示约束"><svg viewBox="0 0 24 24"><path d="M2 3h20v18H2z" stroke="#d22" stroke-width="2"/><path d="M12 1v22" stroke-dasharray="5 2"/></svg></button>
<button class="btn tool lit" aria-label="显示所有约束"><svg viewBox="0 0 24 24"><path d="M8 8h12v11H8zM6 13h17" stroke="#3b38c8"/><circle cx="16" cy="14" r="5" stroke="#3b38c8"/><path d="M2 22l9-10" stroke="#b22" stroke-width="4"/></svg></button><button class="btn drop" aria-label="约束选项"></button>
<span class="split"></span>
<button class="btn tool" aria-label="转换参考"><svg viewBox="0 0 24 24"><path d="M2 2h9v9H2zM13 14h9v8h-9zM2 16h6v6H2z" fill="#e8e8e8"/><path d="M3 21l4-4" stroke="#000"/><use href="#pencil" x="7" y="1" width="16" height="17"/></svg></button>
<button class="btn drop more" aria-label="工具条选项"></button>
</footer>
<div class="brand d-flex align-items-center">
<svg viewBox="0 0 38 38" class="ms-3 me-2 flex-shrink-0"><path d="M10 8v21c0 4 3 4 6 2l15-9c3-2 3-5 0-7L16 5c-4-3-9-2-9 3"/><path d="M3 8v20c0 5 3 8 8 7"/><path d="M15 14l8 5-8 5z" fill="#cdd0d9" stroke="none"/><path d="M25 15v8" stroke-width="2"/></svg>
<div class="text-nowrap"><b>溜溜自学</b><small>ziXUE.3D66.COM</small></div>
</div>
</body>
</html>
